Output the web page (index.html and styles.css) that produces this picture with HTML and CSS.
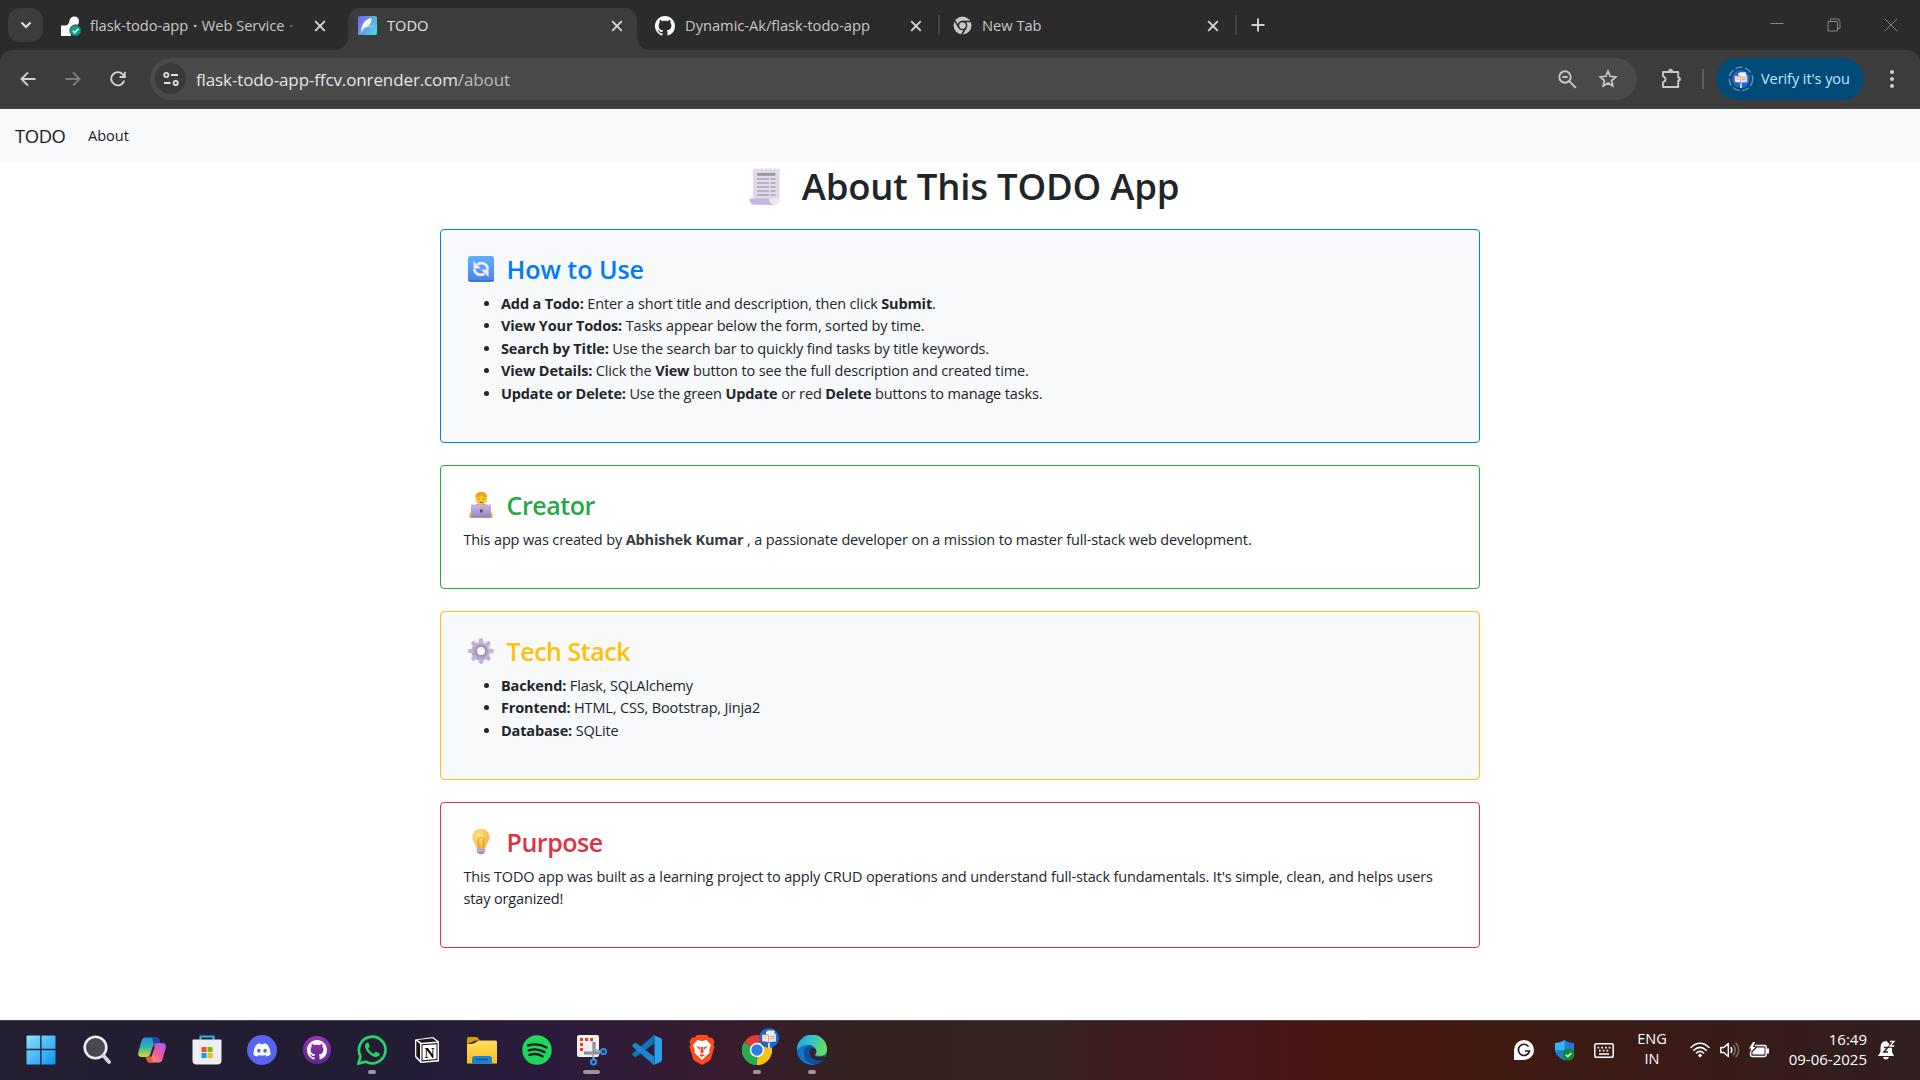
FILE: index.html
```
<!DOCTYPE html>
<html lang="en">
<head>
<meta charset="utf-8">
<title>TODO</title>
<link rel="stylesheet" href="styles.css">
</head>
<body>
<svg class="defs" width="0" height="0" aria-hidden="true">
  <defs>
    <symbol id="x" viewBox="0 0 12 12"><path d="M1.2 1.2 10.8 10.8M10.8 1.2 1.2 10.8" stroke="currentColor" stroke-width="1.9" fill="none"/></symbol>
    <symbol id="octocat" viewBox="0 0 16 16"><path fill="currentColor" d="M8 0C3.58 0 0 3.58 0 8c0 3.54 2.29 6.53 5.47 7.59.4.07.55-.17.55-.38 0-.19-.01-.82-.01-1.49-2.01.37-2.53-.49-2.69-.94-.09-.23-.48-.94-.82-1.13-.28-.15-.68-.52-.01-.53.63-.01 1.08.58 1.23.82.72 1.21 1.87.87 2.33.66.07-.52.28-.87.51-1.07-1.78-.2-3.64-.89-3.64-3.95 0-.87.31-1.59.82-2.15-.08-.2-.36-1.02.08-2.12 0 0 .67-.21 2.2.82.64-.18 1.32-.27 2-.27s1.36.09 2 .27c1.53-1.04 2.2-.82 2.2-.82.44 1.1.16 1.92.08 2.12.51.56.82 1.27.82 2.15 0 3.07-1.87 3.75-3.65 3.95.29.25.54.73.54 1.48 0 1.07-.01 1.93-.01 2.2 0 .21.15.46.55.38A8.01 8.01 0 0 0 16 8c0-4.42-3.58-8-8-8z"/></symbol>
    <symbol id="avatar" viewBox="0 0 20 20"><circle cx="10" cy="10" r="10" fill="#1667d8"/><path d="M7 4 9 2.6h6.5V9H7z" fill="#f3f3f1"/><path d="M3 6.3 9.5 7v7.2L3 13.4z" fill="#fff" stroke="#d84b2a" stroke-width=".8"/><path d="M9.500 7 17 5.800v7.700l-7.500 .8z" fill="#dfe4ea"/><path d="M4.300 8.500h4M4.300 10.500h4M11 8.500h4.500M11 10.500h4.500" stroke="#e3a178" stroke-width=".8"/><path d="M9 15h2v5H9z" fill="#cfe0f2"/></symbol>
    <linearGradient id="gWin" x1="0" y1="0" x2="1" y2="1"><stop offset="0" stop-color="#8be3ff"/><stop offset="1" stop-color="#0a93f5"/></linearGradient>
    <linearGradient id="gTodo" x1="0" y1="0" x2="1" y2=".6"><stop offset="0" stop-color="#7a5cf0"/><stop offset="1" stop-color="#4fd0e0"/></linearGradient>
    <linearGradient id="gLilac" x1="0" y1="0" x2="0" y2="1"><stop offset="0" stop-color="#c9b7e2"/><stop offset="1" stop-color="#9b84c0"/></linearGradient>
    <linearGradient id="gRefresh" x1="0" y1="0" x2="0" y2="1"><stop offset="0" stop-color="#5ab4fb"/><stop offset="1" stop-color="#4a82e6"/></linearGradient>
    <linearGradient id="gGear" x1="1" y1="0" x2="0" y2="1"><stop offset="0" stop-color="#ddd6e8"/><stop offset="1" stop-color="#a593bf"/></linearGradient>
    <radialGradient id="gBulb" cx=".4" cy=".35" r=".7"><stop offset="0" stop-color="#ffe88a"/><stop offset="1" stop-color="#f5b02e"/></radialGradient>
    <linearGradient id="gCopA" x1="0" y1="0" x2="0" y2="1"><stop offset="0" stop-color="#1b8df0"/><stop offset=".5" stop-color="#35b7a4"/><stop offset="1" stop-color="#e8cf35"/></linearGradient>
    <linearGradient id="gCopB" x1="1" y1="0" x2="0" y2="1"><stop offset="0" stop-color="#a35cf2"/><stop offset=".5" stop-color="#ee5d9a"/><stop offset="1" stop-color="#ffb152"/></linearGradient>
    <linearGradient id="gFolder" x1="0" y1="0" x2="0" y2="1"><stop offset="0" stop-color="#ffdc62"/><stop offset="1" stop-color="#fdc01e"/></linearGradient>
    <linearGradient id="gEdge" x1="0" y1="0" x2="1" y2=".3"><stop offset="0" stop-color="#1f9fe0"/><stop offset=".5" stop-color="#35c1d2"/><stop offset="1" stop-color="#66dc5a"/></linearGradient>
    <linearGradient id="gPurple" x1="0" y1="0" x2="0" y2="1"><stop offset="0" stop-color="#9c33b8"/><stop offset="1" stop-color="#5b2a86"/></linearGradient>
  </defs>
</svg>

<header class="browser">
  <div class="tabstrip">
    <div class="tab-search"><svg width="12" height="8" viewBox="0 0 12 8"><path d="M1.500 1.500 6 6l4.500-4.500" fill="none" stroke="#e3e3e3" stroke-width="2"/></svg></div>
    <div class="tab first">
      <svg width="20" height="20" viewBox="0 0 20 20"><path d="M0 20V9.500h4c2.500 0 3.700-1.500 4.200-3.700C8.700 2.300 10.700.5 13.500.5c2.600 0 4.500 2 4.500 4.700 0 3-2 5-5 5-1.700.2-3 1.300-3 3.300V20z" fill="#fff"/><circle cx="14.500" cy="14.500" r="5.700" fill="#0aa37f" stroke="#2b2b2b" stroke-width=".7"/><path d="M11.800 14.700l2 2 3.500-4" fill="none" stroke="#fff" stroke-width="1.500"/></svg>
      <span class="tab-title">flask-todo-app <b>·</b> Web Service <b class="dim">·</b></span>
      <svg class="close" width="12" height="12"><use href="#x"/></svg>
    </div>
    <div class="tab active">
      <svg width="19" height="19" viewBox="0 0 19 19"><rect width="19" height="19" rx="1.500" fill="url(#gTodo)"/><path d="M3 16.500C3 9 7 3 13.500 2c.3 5-3 9.500-8.500 10.500z" fill="#fff"/><path d="M3 17 10 7M10 12l2-3 1 3 3-3" stroke="#bcd3f8" stroke-width=".8" fill="none"/></svg>
      <span class="tab-title">TODO</span>
      <svg class="close" width="12" height="12"><use href="#x"/></svg>
    </div>
    <div class="tab third">
      <svg class="white" width="20" height="20"><use href="#octocat"/></svg>
      <span class="tab-title">Dynamic-Ak/flask-todo-app</span>
      <svg class="close" width="12" height="12"><use href="#x"/></svg>
    </div>
    <div class="tab fourth">
      <svg width="19" height="19" viewBox="0 0 19 19"><circle cx="9.500" cy="9.500" r="9" fill="#c7c7c7"/><circle cx="9.500" cy="9.500" r="4.100" fill="#c7c7c7" stroke="#2b2b2b" stroke-width="1.500"/><path d="M9.500 5.400H18M5.900 11.500 1.800 4.700M13.100 11.500 8.800 18.500" stroke="#2b2b2b" stroke-width="1.500"/></svg>
      <span class="tab-title">New Tab</span>
      <svg class="close" width="12" height="12"><use href="#x"/></svg>
    </div>
    <svg class="new-tab" width="14" height="14" viewBox="0 0 14 14"><path d="M7 .5v13M.5 7h13" stroke="#d0d0d0" stroke-width="2"/></svg>
    <div class="window-controls">
      <svg width="14" height="14" viewBox="0 0 14 14"><path d="M.5 5.500h13"/></svg>
      <svg width="14" height="14" viewBox="0 0 14 14"><path d="M1 3.500h9.500V13H1zM3.500 3V1h7Q13 1 13 3.500v7h-2"/></svg>
      <svg width="14" height="14" viewBox="0 0 14 14"><path d="M.7.700 13.300 13.300M13.300.7.700 13.300"/></svg>
    </div>
  </div>
  <div class="toolbar">
    <div class="nav-buttons">
      <svg width="16" height="16" viewBox="0 0 16 16"><path d="M15.500 8H2M8 1.300 1.500 8 8 14.700" fill="none" stroke="#d0d0d0" stroke-width="1.900"/></svg>
      <svg width="16" height="16" viewBox="0 0 16 16"><path d="M.5 8H14M8 1.300 14.500 8 8 14.700" fill="none" stroke="#7b7b7b" stroke-width="1.900"/></svg>
      <svg width="16" height="16" viewBox="0 0 16 16"><path d="M14.200 9.500A6.600 6.600 0 1 1 12.700 3.300L14.500 5.200M14.800.8v5.200H9.500" fill="none" stroke="#d0d0d0" stroke-width="1.900"/></svg>
    </div>
    <div class="omnibox">
      <div class="site-info"><svg width="16" height="14" viewBox="0 0 16 14" fill="none" stroke="#e0e0e0" stroke-width="1.800"><circle cx="3.300" cy="3" r="2.100"/><path d="M8 3h7M1 11h6.500"/><circle cx="12.700" cy="11" r="2.100"/></svg></div>
      <div class="url">flask-todo-app-ffcv.onrender.com<span>/about</span></div>
      <svg class="zoom-icon" width="19" height="19" viewBox="0 0 19 19" fill="none" stroke="#c7c7c7" stroke-width="1.900"><circle cx="7" cy="7" r="5.700"/><path d="M4.500 7h5M11.200 11.200 17.800 17.800"/></svg>
      <svg class="star" width="20" height="19" viewBox="0 0 20 19"><path d="M10 2.200l2.200 5.100 5.600.5-4.200 3.700 1.200 5.400L10 14l-4.800 2.900 1.200-5.400L2.200 7.800l5.600-.5z" fill="none" stroke="#c7c7c7" stroke-width="1.700"/></svg>
    </div>
    <svg class="puzzle" width="21" height="21" viewBox="0 0 21 21"><path d="M2 4h15.200v5.400a1.700 1.700 0 0 1 0 3.400V19H2v-4.700q2.500-.7 2.500-3T2 8.300z" fill="none" stroke="#c7c7c7" stroke-width="1.900" stroke-linejoin="round"/><path d="M7.200 3.500a2.400 2.800 0 0 1 4.800 0zM17.500 8.800a2.800 2.500 0 0 1 0 4.800z" fill="#c7c7c7"/></svg>
    <span class="divider"></span>
    <div class="verify">
      <svg width="26" height="26" viewBox="0 0 26 26"><circle cx="13" cy="13" r="11.700" fill="none" stroke="#6b93ae" stroke-width="1.400" stroke-dasharray="7.500 2.300"/><svg x="4" y="4" width="18" height="18"><use href="#avatar"/></svg></svg>
      <span>Verify it's you</span>
    </div>
    <svg class="kebab" width="4" height="18" viewBox="0 0 4 18" fill="#d0d0d0"><circle cx="2" cy="2" r="2"/><circle cx="2" cy="9" r="2"/><circle cx="2" cy="16" r="2"/></svg>
  </div>
</header>

<nav class="navbar"><a class="brand">TODO</a><a class="nav-link">About</a></nav>

<main class="container">
  <h1>
    <svg width="32" height="37" viewBox="0 0 32 37"><path d="M4 0l2 1.500L8.200 0l2.200 1.500L12.600 0l2.200 1.500L17 0l2.200 1.500L21.400 0l2.200 1.500L25.800 0 28 1.500 30.500 0v31.500q0 4.500-4 5.200H16L4 30z" fill="#dfd9e9"/><rect x="8" y="5" width="18.500" height="2.800" rx="1" fill="#9a94a4"/><path d="M8 11h12M21.500 11h5M8 15h12M21.500 15h5M8 19h12M21.500 19h5M8 23h12M21.500 23h5M8 27h12M21.500 27h5" stroke="#aaa4b4" stroke-width="1.700"/><path d="M.5 30.500h19.500q-.5 5 5.500 6.200H4.500Q.5 36 .5 30.500z" fill="#c7b5df"/><path d="M20 30.500h10.500q.3 5-4 6.200Q20 36 20 30.500z" fill="#eee8f6"/></svg>
    <span>About This TODO App</span>
  </h1>

  <section class="card blue shaded">
    <h3><svg width="26" height="26" viewBox="0 0 26 26"><rect width="26" height="26" rx="2.500" fill="url(#gRefresh)"/><path d="M.5 24.500q12 1.500 25 0" stroke="#386ac8" fill="none"/><path d="M9.500 8.300q5-2.600 8.500.7 1.700 1.800 1.500 4.500M16.500 17.700q-5 2.600-8.500-.7-1.700-1.800-1.500-4" fill="none" stroke="#f3ecff" stroke-width="2.800"/><path d="M5.500 5v7.500H13zM20.500 21v-7.500H13z" fill="#f3ecff"/></svg><span class="wide">How to Use</span></h3>
    <ul>
      <li><strong>Add a Todo:</strong> Enter a short title and description, then click <strong>Submit</strong>.</li>
      <li><strong>View Your Todos:</strong> Tasks appear below the form, sorted by time.</li>
      <li><strong>Search by Title:</strong> Use the search bar to quickly find tasks by title keywords.</li>
      <li><strong>View Details:</strong> Click the <strong>View</strong> button to see the full description and created time.</li>
      <li><strong>Update or Delete:</strong> Use the green <strong>Update</strong> or red <strong>Delete</strong> buttons to manage tasks.</li>
    </ul>
  </section>

  <section class="card green">
    <h3><svg width="26" height="26" viewBox="0 0 26 26"><path d="M1 25q0-5 3.500-6h17q3.500 1 3.500 6z" fill="#fcc22a"/><path d="M7.500 14q0-2 3-2.500h5q3 .5 3 2.500z" fill="#9b7fc4"/><rect x="7.500" y="0" width="11.500" height="12.500" rx="5.500" fill="#fdc62f"/><path d="M7.500 5q0-5 6-5t5.500 5.500q-3 .3-5.500-2.200Q11 6 7.500 5z" fill="#f4a41c"/><path d="M11 6.500v1M15.500 6.500v1M11.500 10q1.700 1 3.500 0" stroke="#7a4a1a" fill="none"/><rect x="3" y="12.500" width="20" height="12.500" rx="1.300" fill="url(#gLilac)"/><path d="M2 25.300h22" stroke="#8d78ad"/><rect x="12" y="17.500" width="2.600" height="3" fill="#55466b"/></svg><span>Creator</span></h3>
    <p>This app was created by <strong class="name">Abhishek Kumar</strong> , a passionate developer on a mission to master full-stack web development.</p>
  </section>

  <section class="card yellow shaded">
    <h3><svg width="26" height="26" viewBox="0 0 26 26"><g fill="none" stroke="url(#gGear)"><circle cx="13" cy="13" r="7" stroke-width="5"/><g stroke-width="4.500" stroke-linecap="round" stroke="#c0b3d3"><path d="M13 5V2.300M13 21v2.700M5 13H2.300M21 13h2.700M7.500 7.500 5.500 5.500M18.500 18.500l2 2M18.500 7.500l2-2M7.500 18.500l-2 2"/></g></g><circle cx="13" cy="13" r="7.200" fill="#ab9bc4"/><circle cx="13" cy="13" r="4.600" fill="#f8f9fa" stroke="#8f83a3" stroke-width=".9"/></svg><span>Tech Stack</span></h3>
    <ul>
      <li><strong>Backend:</strong> Flask, SQLAlchemy</li>
      <li><strong>Frontend:</strong> HTML, CSS, Bootstrap, Jinja2</li>
      <li><strong>Database:</strong> SQLite</li>
    </ul>
  </section>

  <section class="card red">
    <h3><svg width="26" height="26" viewBox="0 0 26 26"><path d="M13 0c5 0 8.500 3.500 8.500 8.300 0 4.200-3.500 6-4.300 11.200H8.800C8 14.300 4.500 12.500 4.500 8.300 4.500 3.500 8 0 13 0z" fill="url(#gBulb)"/><path d="M11 19 10 10q3-3 6 0l-1 9" fill="none" stroke="#e8992a" stroke-width="1.100"/><path d="M9 19.500h8V23q-1 2-4 2.500Q10 25 9 23z" fill="#a391b6"/><path d="M9 21.500h8" stroke="#cfc4da"/></svg><span>Purpose</span></h3>
    <p>This TODO app was built as a learning project to apply CRUD operations and understand full-stack fundamentals. It's simple, clean, and helps users stay organized!</p>
  </section>
</main>

<footer class="taskbar">
  <div class="apps">
    <div class="app"><svg width="30" height="30" viewBox="0 0 30 30"><path d="M1.500.5h12.700v13.300H.5V1.500q0-1 1-1zM15.500.5h13q1 0 1 1v12.300h-14zM.5 15.200h13.700v14.300H1.500q-1 0-1-1zM15.500 15.200h14v13.300q0 1-1 1h-13z" fill="url(#gWin)"/></svg></div>
    <div class="app"><svg width="28" height="30" viewBox="0 0 28 30"><circle cx="12.500" cy="12.500" r="10.800" fill="#4a4654" stroke="#ececf0" stroke-width="2.600"/><path d="M20.300 20.500 26 27" stroke="#d4d3da" stroke-width="3.800" stroke-linecap="round"/></svg></div>
    <div class="app"><svg width="30" height="26" viewBox="0 0 30 26"><path d="M8 .5h11.500q2 0 2.700 2.500l.8 3h-3.500q-2.500 0-3.300 2.500L13 17.500q-.9 2.500-3.500 2.500H5q-5 0-3.600-5L4.500 3.500Q5.500.5 8 .5z" fill="url(#gCopA)"/><path d="M15 .5h5q2 0 2.700 2.500l.8 3h-4q-2.500 0-3 1z" fill="#1a45b8"/><path d="M22 25.500H13q-2.500 0-3-2l-.8-3h1.300q2.500 0 3.300-2.500L17 8.500Q17.900 6 20.500 6H25q5 0 3.700 5l-3.200 11.500q-1 3-3.500 3z" fill="url(#gCopB)"/><path d="M18 9.500 14.300 20.500h-1.500L16.500 9.500z" fill="#2a1f38"/><path d="M16.500 25.500h-4q-2 0-2.500-2l-.8-3h1.300q2.300 0 3-2z" fill="#ef5a3c"/></svg></div>
    <div class="app"><svg width="30" height="30" viewBox="0 0 30 30"><path d="M8.500 5.500V1.500h13v4" fill="none" stroke="#2cb4ee" stroke-width="2.200"/><path d="M.5 5.500q0-1 1-1h27q1 0 1 1v20q0 4-4 4h-21q-4 0-4-4z" fill="#eeedef"/><path d="M9.500 12h5v5h-5z" fill="#f25022"/><path d="M15.500 12h5v5h-5z" fill="#7fba00"/><path d="M9.500 18h5v5h-5z" fill="#00a4ef"/><path d="M15.500 18h5v5h-5z" fill="#ffb900"/></svg></div>
    <div class="app"><svg width="30" height="30" viewBox="0 0 30 30"><circle cx="15" cy="15" r="15" fill="#5865f2"/><path d="M9.200 10q2-1.500 4-1.700l.5 1h2.600l.5-1q2 .2 4 1.700 3 4.500 2.800 9.500-1.700 1.500-4.200 2l-1-1.600q-3.400 1-6.800 0l-1 1.600q-2.500-.5-4.200-2Q6.200 14.500 9.200 10z" fill="#fff"/><ellipse cx="11.900" cy="15.700" rx="1.800" ry="2" fill="#5865f2"/><ellipse cx="18.100" cy="15.700" rx="1.800" ry="2" fill="#5865f2"/></svg></div>
    <div class="app"><svg class="white" width="28" height="28" viewBox="0 0 28 28"><circle cx="14" cy="14" r="14" fill="url(#gPurple)"/><svg x="4" y="4" width="20" height="20"><use href="#octocat"/></svg></svg></div>
    <div class="app running"><svg width="30" height="30" viewBox="0 0 30 30"><path d="M1.500 28.500l2-7.200A13.300 13.300 0 1 1 8.700 26.600z" fill="none" stroke="#25d366" stroke-width="2.700"/><path d="M10.500 7.500c-.8 0-2.500 1.300-2.500 3.700 0 4.500 6.500 10.800 11 10.800 2.300 0 3.700-1.600 3.700-3.400l-4-2.100-1.900 2.200c-2.500-.8-4.500-2.700-5.600-5.200l1.500-1.800L11.500 7.500z" fill="#25d366"/></svg></div>
    <div class="app"><svg width="26" height="28" viewBox="0 0 26 28"><path d="M1 3.500 19 1l6 4.500v20L6.500 27 1 21z" fill="#fff"/><path d="M2.300 4.800 6 8v16L2.300 20zM3.500 4 18.500 2.200 23 5.500 7.500 6.800zM7.500 8.300 23.500 7v17L7.500 25.500z" fill="#17161b"/><path d="M8.500 9.300 22.500 8.200v14.900L8.500 24.300z" fill="#fff"/><text x="15.500" y="21.500" text-anchor="middle" class="notion-n">N</text></svg></div>
    <div class="app"><svg width="30" height="28" viewBox="0 0 30 28"><path d="M0 2.500Q0 1 1.500 1H10l3 3.500h-4L0 8z" fill="#d89b0c"/><path d="M0 8q6 0 8.500-1.500L11.500 4.500h17q1.500 0 1.500 1.500v21.500H0z" fill="url(#gFolder)"/><path d="M5 27.500V23q0-3 3-3h14q3 0 3 3v4.500z" fill="#1583d6"/><path d="M9 23.500h12" stroke="#0a4a8c" stroke-width="1.200"/></svg></div>
    <div class="app"><svg width="30" height="30" viewBox="0 0 30 30"><circle cx="15" cy="15" r="14.700" fill="#1ed760"/><path d="M6 10.500q10-3 18.500 2M6.800 15.300q8.500-2.500 15.700 1.800M7.500 19.800q7.200-2 13 1.500" fill="none" stroke="#16181c" stroke-width="2.400" stroke-linecap="round"/></svg></div>
    <div class="app focused"><svg width="32" height="32" viewBox="0 0 32 32"><rect x="1" y="1" width="22" height="22" rx="2" fill="#f1eff1"/><path d="M4 5.500h14M5.500 4v13" stroke="#e0401c" stroke-width="3" stroke-dasharray="3 2" fill="none"/><path d="M18 8v11M8 19h16" stroke="#8c8f98" stroke-width="3.200" fill="none"/><path d="M17 15l8 3M16 19l2 6" stroke="#a6aab2" stroke-width="2"/><circle cx="27.500" cy="17.500" r="2.600" fill="none" stroke="#1a9be6" stroke-width="2"/><circle cx="17.500" cy="28" r="2.600" fill="none" stroke="#1a9be6" stroke-width="2"/></svg></div>
    <div class="app"><svg width="30" height="30" viewBox="0 0 30 30"><path d="M22 0v8.500L4 22q-.7.500-1.300 0L.5 20q-.8-.8 0-1.500z" fill="#0f73b8"/><path d="M22 30v-8.500L4 8q-.7-.5-1.300 0L.5 10q-.8.800 0 1.500z" fill="#1787d0"/><path d="M21.500 0 28.500 3q1.500.8 1.500 2.300v19.400q0 1.500-1.500 2.300l-7 3q1-1 1-2.500v-25q0-1.500-1-2.500z" fill="#2aa3ef"/></svg></div>
    <div class="app"><svg width="26" height="30" viewBox="0 0 26 30"><path d="M8 0h10l2.500 2.800 2.500-.3 2.500 4L24.500 9.500 25.500 12 22 23.500q-.5 1.500-2 2.500L13 30l-7-4q-1.500-1-2-2.500L.5 12l1-2.500L.5 6.500l2.500-4 2.500.3z" fill="#fb4a1d"/><path d="M13 6l4.500-1 4.500 5-1.800 5 .3 2.800-4 3.700L13 25l-3.500-3.500-4-3.700.3-2.800L4 10l4.500-5z" fill="#fff"/><path d="M7 11l4.500 1.200L11 15zM19 11l-4.500 1.200L15 15zM12 12h2l.7 5L13 18.500 11.300 17zM10 20l3-1 3 1-3 2z" fill="#fb4a1d"/></svg></div>
    <div class="app running"><svg width="30" height="30" viewBox="0 0 30 30"><path d="M15 15 2 7.500A15 15 0 0 1 28 7.500z" fill="#e33b2e"/><path d="M15 15 28 7.500A15 15 0 0 1 15 30z" fill="#fbc116"/><path d="M15 15v15A15 15 0 0 1 2 7.500z" fill="#2da94f"/><path d="M15 8h13.300A15 15 0 0 1 15 30l6-11.500z" fill="#fbc116"/><path d="M2 7.500 9 18.500l6 3.500 1.500 0L13 29.900A15 15 0 0 1 2 7.500z" fill="#2da94f"/><circle cx="15" cy="15" r="7.200" fill="#fff"/><circle cx="15" cy="15" r="5.700" fill="#2f7de9"/></svg><svg class="badge" width="20" height="20"><use href="#avatar"/></svg></div>
    <div class="app running"><svg width="30" height="30" viewBox="0 0 30 30"><circle cx="15" cy="15" r="15" fill="#1272c8"/><path d="M0 15A15 15 0 0 1 30 14q.3 5.500-5 6.500-5 .8-7-.8 2-1.500 1.500-4Q18.500 10 11.500 10 4 10 0 15z" fill="url(#gEdge)"/><path d="M11.500 10Q5 14 7.500 22q2.500 7 10.500 7.500 6-.8 10-6-6 2.500-11 0-5.500-3-4.500-8 .5-2.500 3-3.200Q13.700 10 11.500 10z" fill="#0c4f9e"/><path d="M15 12.200q4 1 4.300 4 .2 2-1.300 3.500-1.200.8 1 1.700 3.800 1 7-.5l3 1.500-2 2.500q-5 1.500-10-1-5.500-3-4.500-8 .5-2.700 2.500-3.700z" fill="#33202a"/></svg></div>
  </div>

  <div class="tray">
    <svg class="t1" width="20" height="20" viewBox="0 0 20 20"><path d="M0 20V10A10 10 0 1 1 10 20z" fill="#fff"/><path d="M14.500 6.500A5.600 5.600 0 1 0 15.500 11H11" fill="none" stroke="#35191a" stroke-width="1.700"/></svg>
    <svg class="t2" width="20" height="21" viewBox="0 0 20 21"><path d="M9.500 0Q13 3 19 3v7q0 6-9.500 10.500Q0 16 0 10V3q6 0 9.500-3z" fill="#1b7fd6"/><path d="M9.500 0v10.300H0V3q6 0 9.500-3z" fill="#37b3ee"/><circle cx="13.500" cy="14.500" r="6" fill="#118a2b"/><path d="M10.800 14.700l2 2 3.500-3.800" fill="none" stroke="#fff" stroke-width="1.400"/></svg>
    <svg class="t3" width="20" height="15" viewBox="0 0 20 15" fill="none" stroke="#fff"><rect x=".8" y=".8" width="18.400" height="13.400" rx="1.800" stroke-width="1.500"/><path d="M3.500 4.700h13M5 7.700h11" stroke-width="1.700" stroke-dasharray="1.700 2.050"/><path d="M5 11h10" stroke-width="1.500"/></svg>
    <div class="lang"><span>ENG</span><span>IN</span></div>
    <svg class="t4" width="20" height="16" viewBox="0 0 20 16" fill="none" stroke="#fff" stroke-width="1.500" stroke-linecap="round"><path d="M1 5.500q9-8.500 18 0M3.800 8.300q6.200-5.800 12.400 0M6.500 11q3.500-3.300 7 0"/><circle cx="10" cy="13.500" r="1.300" fill="#fff" stroke-width=".8"/></svg>
    <svg class="t5" width="20" height="16" viewBox="0 0 20 16" fill="none" stroke="#fff" stroke-width="1.400" stroke-linecap="round" stroke-linejoin="round"><path d="M.8 5.500h3L8.300 1.500v13L3.800 10.500h-3z"/><path d="M11 5.500q1.700 2.500 0 5"/><path d="M13.500 3.300q3.500 4.700 0 9.400M16 1.200q5.500 6.800 0 13.600" stroke="#83706f"/></svg>
    <svg class="t6" width="20" height="16" viewBox="0 0 20 16"><path d="M6 3.500h9.500q1.700 0 1.700 1.700v7.600q0 1.700-1.700 1.700H3.300q-1.700 0-1.700-1.700V10" fill="none" stroke="#fff" stroke-width="1.500"/><path d="M8 5.500h7.500v7H3.500V10zM18 6.500h2v5h-2z" fill="#fff"/><path d="M4 0 0 6.500h2.300L1 11l5.500-6H4L6 0z" fill="#fff"/></svg>
    <div class="clock"><span>16:49</span><span>09-06-2025</span></div>
    <svg class="t7" width="18" height="20" viewBox="0 0 18 20"><path d="M8.500 1Q2.500 1 2.500 8v4L0 16h16l-2-4V7z" fill="#fff"/><path d="M5 17h6q-.7 2.500-3 2.500T5 17z" fill="#fff"/><path d="M12 1h4.500L12 6.300h4.500" fill="none" stroke="#35201f" stroke-width="3"/><path d="M12 1.500h4L12 6h4.200" fill="none" stroke="#fff" stroke-width="1.300"/><path d="M5.800 7.500h4l-4 4.500h4.200" fill="none" stroke="#35201f" stroke-width="1.400"/></svg>
  </div>
</footer>
</body>
</html>
```
FILE: styles.css
```
* { box-sizing: border-box; }
html { font-size: 15px; }
body {
  margin: 0;
  height: 1080px;
  overflow: hidden;
  display: flex;
  flex-direction: column;
  background: #fff;
  color: #212529;
  font-family: "Open Sans", "Noto Sans", sans-serif;
}
svg { display: block; flex: none; }
.defs { position: absolute; }
.white { color: #fff; }

/* browser window */
.browser { height: 109px; flex: none; background: #2b2b2b; }
.tabstrip { display: flex; height: 50px; padding: 8px 0 0 8px; color: #c7c7c7; }
.tab-search {
  display: flex; align-items: center; justify-content: center;
  width: 35px; height: 34px; border-radius: 12px; background: #3c3c3c;
}
.tab {
  position: relative;
  display: flex; align-items: center;
  height: 42px; padding: 0 14px 7px 10px;
  font-size: 14.7px;
}
.tab-title { flex: 1; margin-left: 10px; padding-bottom: 2px; white-space: nowrap; line-height: 24px; letter-spacing: -0.03px; }
.close { color: #d6d6d6; }
.first { width: 296px; margin-left: 9px; padding-left: 9px; padding-right: 22px; }
.first .tab-title { margin-left: 9px; letter-spacing: -0.06px; }
.tab-title b { margin: 0 1px; }
.dim { color: #6a6a6a; }
.active { width: 289px; background: #3c3c3c; border-radius: 12px 12px 0 0; color: #e3e3e3; }
.active::before, .active::after { content: ""; position: absolute; bottom: 0; width: 12px; height: 12px; }
.active::before { left: -12px; background: radial-gradient(circle at 0 0, transparent 11.5px, #3c3c3c 12px); }
.active::after { right: -12px; background: radial-gradient(circle at 100% 0, transparent 11.5px, #3c3c3c 12px); }
.third { width: 303px; padding-left: 18px; padding-right: 18px; }
.fourth { width: 297px; padding-left: 13px; padding-right: 18px; }
.third::after, .fourth::after { content: ""; position: absolute; right: 0; top: 7px; width: 2px; height: 20px; background: #444; }
.new-tab { margin: 10px 0 0 14px; }
.window-controls { display: flex; gap: 43px; margin: 10px 22px 0 auto; fill: none; stroke: #858585; stroke-width: 1; }

.toolbar {
  display: flex; align-items: center;
  height: 59px; padding-bottom: 1px;
  background: #3c3c3c; border-radius: 12px 12px 0 0; border-bottom: 1px solid #474747;
}
.nav-buttons { display: flex; gap: 29px; margin-left: 20px; }
.omnibox {
  display: flex; align-items: center;
  width: 1487px; height: 42px; margin-left: 24px; padding-left: 5px;
  border-radius: 21px; background: #4a4a4a;
}
.site-info { display: flex; align-items: center; justify-content: center; width: 31px; height: 31px; border-radius: 50%; background: #3a3a3a; }
.url { flex: 1; margin-left: 10px; padding-top: 1px; font-size: 17px; letter-spacing: -0.12px; color: #e6e6e6; }
.url span { color: #bdbdbd; }
.zoom-icon { margin: 1px 21px 0 0; }
.star { margin-right: 19px; }
.puzzle { margin-left: 24px; }
.divider { width: 2px; height: 20px; margin: 0 12px 0 20px; background: #5c5c5c; }
.verify {
  display: flex; align-items: center; gap: 7px;
  width: 148px; height: 42px; padding-left: 12px;
  border-radius: 21px; background: #004a77; color: #c2e7ff;
  font-size: 14.5px; letter-spacing: -0.07px; white-space: nowrap;
}
.kebab { margin-left: 26px; }

/* page */
.navbar { display: flex; align-items: center; height: 52.5px; flex: none; padding-left: 15px; background: #f8f9fa; color: #1a1a1a; }
.brand { width: 73px; font-size: 18.4px; letter-spacing: -0.4px; }
.nav-link { font-size: 14.5px; }
.container { width: 1040px; margin: 0 auto; flex: 1; }
h1, h3, p, ul { margin: 0; }
h1 {
  display: flex; align-items: center; justify-content: center; gap: 21px;
  height: 45px; margin-bottom: 22.5px; padding: 4px 0 0 8px;
  font-size: 36.5px; font-weight: 600; letter-spacing: -0.2px;
}
.card { margin-bottom: 22.5px; padding: 23.5px 22.5px 21.5px; border: 1px solid; border-radius: 4px; }
.shaded { background: #f8f9fa; }
h3 {
  display: flex; align-items: center; gap: 13px;
  height: 31.5px; margin: 0 0 7.5px 4px;
  font-size: 25px; font-weight: 600; letter-spacing: -0.45px; line-height: 31.5px;
}
.wide { letter-spacing: -0.02px; }
ul, p { margin-bottom: 15px; font-size: 14.5px; line-height: 22.5px; letter-spacing: -0.148px; color: #212529; }
ul { padding-left: 37.5px; }
.name { color: #343a40; }
.blue { border-color: #007bff; color: #007bff; }
.green { border-color: #28a745; color: #28a745; }
.yellow { border-color: #ffc107; color: #ffc107; }
.red { border-color: #dc3545; color: #dc3545; }

/* taskbar */
.taskbar {
  display: flex; justify-content: space-between;
  height: 60px; flex: none;
  border-top: 1px solid #4b4650; color: #fff;
  background: linear-gradient(90deg, #231e30 0, #221c34 380px, #2a1b3b 540px, #371b30 710px, #33221f 860px, #34241f 1040px, #42191f 1180px, #4a1612 1330px, #3f1a12 1500px, #391b18 1700px, #301e20 1920px);
}
.apps { display: flex; padding-left: 13px; }
.app { position: relative; display: flex; align-items: center; justify-content: center; width: 55px; height: 59px; padding-bottom: 1px; }
.app:first-child { width: 56px; padding-right: 1px; }
.running::after, .focused::after { content: ""; position: absolute; bottom: 6px; width: 8px; height: 4px; border-radius: 2px; background: #9c949e; }
.focused::after { width: 17px; }
.badge { position: absolute; left: 30px; top: 7px; }
.notion-n { font: bold 14px "Liberation Serif", serif; fill: #000; }
.tray { display: flex; align-items: center; padding: 0 24px 1px 0; font-size: 15px; line-height: 20px; }
.t2 { margin-left: 21px; }
.t3 { margin-left: 19px; }
.lang, .clock { display: flex; flex-direction: column; padding-bottom: 2px; }
.lang { align-items: center; width: 36px; margin: 0 20px; font-size: 14.5px; }
.t5, .t6 { margin-left: 10px; }
.t6 { margin-left: 9px; }
.clock { align-items: flex-end; width: 98px; }
.t7 { margin-left: 11px; }
```
